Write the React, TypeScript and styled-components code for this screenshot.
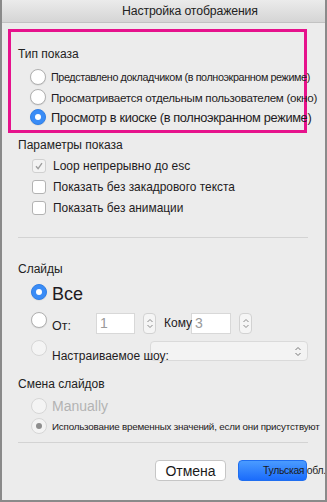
import * as React from "react";
import styled, { createGlobalStyle } from "styled-components";

const GlobalStyle = createGlobalStyle`
  html, body {
    margin: 0;
    padding: 0;
    background: #ececec;
  }
  body {
    font-family: "Liberation Sans", Arial, sans-serif;
    color: #1e1b22;
  }
`;

const Window = styled.div`
  width: 327px;
  height: 502px;
  box-sizing: border-box;
  background: #ececec;
  border: 2px solid #8a8a8a;
  border-top: none;
  display: flex;
  flex-direction: column;
  overflow: hidden;
`;

const TitleBar = styled.div`
  height: 22px;
  flex: none;
  background: linear-gradient(#ebebeb, #d5d5d5);
  border-bottom: 1px solid #c2c2c2;
  display: flex;
  align-items: center;
  padding-left: 120px;
  font-size: 12.3px;
  letter-spacing: -0.15px;
  color: #222;
`;

const Highlight = styled.div`
  margin: 6px 0 0 6px;
  width: 299px;
  height: 104px;
  box-sizing: border-box;
  border: 3px solid #e6128c;
  padding: 14px 0 0 7px;
  display: flex;
  flex-direction: column;
`;

const Heading = styled.div<{ $top?: number }>`
  font-size: 12px;
  line-height: 16px;
  color: #222;
  margin-top: ${(p) => p.$top ?? 0}px;
`;

const Section = styled.div`
  padding-left: 16px;
  display: flex;
  flex-direction: column;
`;

const Options = styled.div<{ $top?: number; $indent: number }>`
  display: flex;
  flex-direction: column;
  margin-top: ${(p) => p.$top ?? 0}px;
  padding-left: ${(p) => p.$indent}px;
`;

const Row = styled.div<{ $h: number }>`
  height: ${(p) => p.$h}px;
  display: flex;
  align-items: center;
  gap: 5px;
  white-space: nowrap;
`;

const Label = styled.span<{ $size: number; $ls?: number; $muted?: boolean; $shift?: number }>`
  font-size: ${(p) => p.$size}px;
  letter-spacing: ${(p) => p.$ls ?? 0}px;
  color: ${(p) => (p.$muted ? "#b3b3b3" : "#1e1b22")};
  position: relative;
  top: ${(p) => p.$shift ?? 0}px;
`;

const Radio = styled.span<{ $checked?: boolean; $disabled?: boolean; $shift?: number }>`
  flex: none;
  width: 16px;
  height: 16px;
  box-sizing: border-box;
  border-radius: 50%;
  position: relative;
  top: ${(p) => p.$shift ?? 0}px;
  background: ${(p) =>
    p.$checked && !p.$disabled
      ? "#3a8cf6"
      : p.$disabled
      ? "#f4f4f4"
      : "#ffffff"};
  border: 1px solid
    ${(p) =>
      p.$checked && !p.$disabled ? "#2f7fe8" : p.$disabled ? "#d6d6d6" : "#b1b1b1"};
  box-shadow: ${(p) => (p.$disabled ? "none" : "0 0.5px 1px rgba(0,0,0,0.12)")};
  display: flex;
  align-items: center;
  justify-content: center;
  &::after {
    content: "";
    display: ${(p) => (p.$checked ? "block" : "none")};
    width: 6px;
    height: 6px;
    border-radius: 50%;
    background: ${(p) => (p.$disabled ? "#8e8e8e" : "#ffffff")};
  }
`;

const Check = styled.span<{ $disabled?: boolean }>`
  flex: none;
  width: 14px;
  height: 14px;
  box-sizing: border-box;
  border-radius: 3px;
  background: ${(p) => (p.$disabled ? "#f3f3f3" : "#ffffff")};
  border: 1px solid ${(p) => (p.$disabled ? "#d0d0d0" : "#b3b3b3")};
  display: flex;
  align-items: center;
  justify-content: center;
  margin: 0 2px 0 1px;
`;

const Separator = styled.div<{ $top: number }>`
  margin: ${(p) => p.$top}px 0 0 16px;
  width: 290px;
  height: 1px;
  flex: none;
  background: #d3d3d3;
`;

const Field = styled.div<{ $w: number }>`
  width: ${(p) => p.$w}px;
  height: 21px;
  box-sizing: border-box;
  background: #ffffff;
  border: 1px solid #d8d8d8;
  font-size: 14px;
  color: #9a9a9a;
  display: flex;
  align-items: center;
  padding-left: 3px;
`;

const Stepper = styled.div`
  width: 13px;
  height: 21px;
  box-sizing: border-box;
  border: 1px solid #d2d2d2;
  border-radius: 4px;
  background: #f5f5f5;
  display: flex;
  align-items: center;
  justify-content: center;
  margin-left: 3px;
`;

const Select = styled.div`
  width: 158px;
  height: 20px;
  box-sizing: border-box;
  background: #f3f3f3;
  border: 1px solid #dadada;
  border-radius: 4px;
  display: flex;
  align-items: center;
  justify-content: flex-end;
  padding-right: 5px;
`;

const Footer = styled.div`
  display: flex;
  margin-top: 17px;
  padding-left: 153px;
  gap: 12px;
`;

const Button = styled.div<{ $primary?: boolean }>`
  height: 21px;
  width: ${(p) => (p.$primary ? 69 : 71)}px;
  box-sizing: border-box;
  border-radius: 4px;
  display: flex;
  align-items: center;
  white-space: nowrap;
  background: ${(p) => (p.$primary ? "linear-gradient(#4a9bff, #1b6cfb)" : "#ffffff")};
  border: 1px solid ${(p) => (p.$primary ? "#1f6ef0" : "#c6c6c6")};
  justify-content: ${(p) => (p.$primary ? "flex-start" : "center")};
  padding-left: ${(p) => (p.$primary ? 24 : 0)}px;
  font-size: ${(p) => (p.$primary ? 10.4 : 14)}px;
  letter-spacing: ${(p) => (p.$primary ? -0.3 : 0)}px;
  color: #1a1a1a;
  overflow: visible;
`;

const Chevrons = ({ color = "#8a8a8a" }: { color?: string }) => (
  <svg width="8" height="13" viewBox="0 0 8 13">
    <path d="M1.5 5 L4 2.5 L6.5 5" fill="none" stroke={color} strokeWidth="1" />
    <path d="M1.5 8 L4 10.5 L6.5 8" fill="none" stroke={color} strokeWidth="1" />
  </svg>
);

export default function App() {
  return (
    <>
      <GlobalStyle />
      <Window>
        <TitleBar>Настройка отображения</TitleBar>

        <Highlight>
          <Heading>Тип показа</Heading>
          <Options $top={5} $indent={12}>
            <Row $h={20}>
              <Radio />
              <Label $size={10.8} $ls={-0.4}>
                Представлено докладчиком (в полноэкранном режиме)
              </Label>
            </Row>
            <Row $h={20}>
              <Radio />
              <Label $size={11.6} $ls={-0.26}>
                Просматривается отдельным пользователем (окно)
              </Label>
            </Row>
            <Row $h={20}>
              <Radio $checked />
              <Label $size={12.8} $ls={-0.35}>
                Просмотр в киоске (в полноэкранном режиме)
              </Label>
            </Row>
          </Options>
        </Highlight>

        <Section>
          <Heading $top={4}>Параметры показа</Heading>
          <Options $top={2} $indent={13}>
            <Row $h={21}>
              <Check $disabled>
                <svg width="10" height="10" viewBox="0 0 10 10">
                  <path d="M2 5.2 L4.1 7.6 L8 2.2" fill="none" stroke="#9c9c9c" strokeWidth="1.3" />
                </svg>
              </Check>
              <Label $size={12}>Loop непрерывно до esc</Label>
            </Row>
            <Row $h={21}>
              <Check />
              <Label $size={11.9}>Показать без закадрового текста</Label>
            </Row>
            <Row $h={21}>
              <Check />
              <Label $size={11.9}>Показать без анимации</Label>
            </Row>
          </Options>
        </Section>

        <Separator $top={19} />

        <Section>
          <Heading $top={23}>Слайды</Heading>
          <Options $top={3} $indent={13}>
            <Row $h={24}>
              <Radio $checked />
              <Label $size={18} $shift={2}>Все</Label>
            </Row>
            <Row $h={22} style={{ marginTop: 8 }}>
              <Radio $shift={-3} />
              <Label $size={12.5} $shift={3} style={{ width: 39 }}>От:</Label>
              <Field $w={39}>1</Field>
              <Stepper>
                <Chevrons />
              </Stepper>
              <Label $size={12} style={{ marginLeft: 3, marginRight: -5, width: 27 }}>Кому</Label>
              <Field $w={40}>3</Field>
              <Stepper>
                <Chevrons />
              </Stepper>
            </Row>
            <Row $h={22} style={{ marginTop: 6 }}>
              <Radio $disabled $shift={-3} />
              <Label $size={12} $shift={5} style={{ width: 93 }}>Настраиваемое шоу:</Label>
              <Select>
                <Chevrons color="#777" />
              </Select>
            </Row>
          </Options>
        </Section>

        <Section>
          <Heading $top={14}>Смена слайдов</Heading>
          <Options $top={4} $indent={13}>
            <Row $h={20}>
              <Radio $disabled />
              <Label $size={14} $muted>Manually</Label>
            </Row>
            <Row $h={20}>
              <Radio $checked $disabled />
              <Label $size={9.8} $ls={-0.2}>
                Использование временных значений, если они присутствуют
              </Label>
            </Row>
          </Options>
        </Section>

        <Separator $top={6} />

        <Footer>
          <Button>Отмена</Button>
          <Button $primary>Тульская обл.</Button>
        </Footer>
      </Window>
    </>
  );
}
